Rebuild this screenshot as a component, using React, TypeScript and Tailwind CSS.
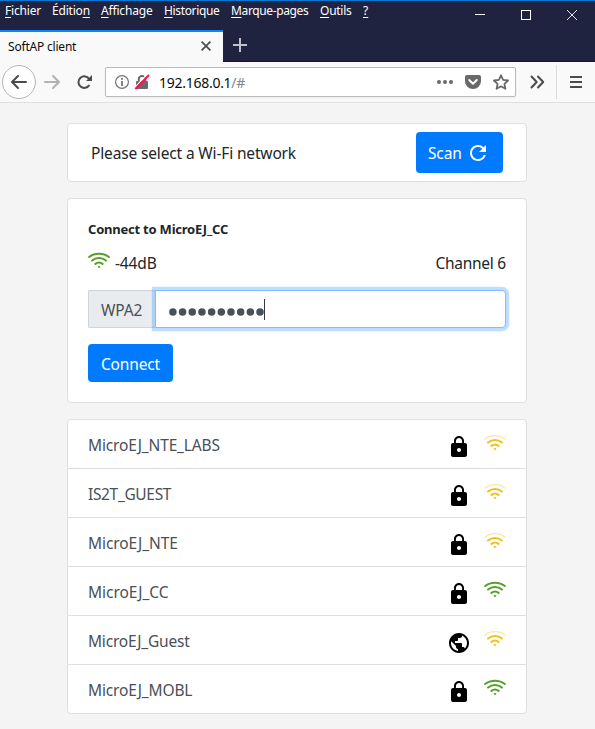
import type { ReactNode } from "react";
import { MdLock, MdPublic, MdRefresh } from "react-icons/md";

const menu = [
  { key: "F", rest: "ichier", cls: "w-[47px] tracking-[-0.18px]" },
  { key: "É", rest: "dition", cls: "w-[49px] tracking-[-0.2px]", last: true },
  { key: "A", rest: "ffichage", cls: "w-[63px] tracking-[-0.18px]" },
  { key: "H", rest: "istorique", cls: "w-[67px] tracking-[-0.35px]" },
  { key: "M", rest: "arque-pages", cls: "w-[89px] tracking-[-0.37px]" },
  { key: "O", rest: "utils", cls: "w-[43px] tracking-[-0.25px]" },
  { key: "?", rest: "", cls: "w-[10px]" },
];

const networks = [
  { name: "MicroEJ_NTE_LABS", locked: true, strong: false, cls: "tracking-[-0.14px]" },
  { name: "IS2T_GUEST", locked: true, strong: false, cls: "tracking-[-0.34px]" },
  { name: "MicroEJ_NTE", locked: true, strong: false, cls: "tracking-[-0.08px]" },
  { name: "MicroEJ_CC", locked: true, strong: true, cls: "tracking-[-0.04px]" },
  { name: "MicroEJ_Guest", locked: false, strong: false, cls: "tracking-[-0.2px]" },
  { name: "MicroEJ_MOBL", locked: true, strong: true, cls: "tracking-[-0.14px]" },
];

function Wifi({ strong }: { strong: boolean }) {
  const color = strong ? "#55a02a" : "#ecc11c";
  return (
    <svg width="22" height="16" viewBox="0 0 22 16" fill="none" stroke={color} strokeWidth="2.1" strokeLinecap="round" className="shrink-0">
      <path d="M1.2 5C6.5.6 15.5.6 20.8 5" strokeWidth={strong ? 2 : 1.3} opacity={strong ? 1 : 0.4} />
      <path d="M4.1 8.5c4-3.3 9.8-3.3 13.8 0" />
      <path d="M7.4 11.9c2.1-1.6 5.1-1.6 7.2 0" />
      <ellipse cx="11" cy="14.9" rx="1.3" ry="0.9" fill={color} stroke="none" />
    </svg>
  );
}

function Card({ className, children }: { className: string; children: ReactNode }) {
  return <section className={`w-[460px] rounded-[4px] border border-[#dedfdf] bg-white ${className}`}>{children}</section>;
}

function TitleBar() {
  return (
    <div className="flex h-[62px] flex-col border-t border-[#0078d7] bg-[#202340] shadow-[inset_0_-1px_0_#15132b]">
      <div className="flex h-[29px] shrink-0 justify-between">
        <nav className="flex pl-[5px] pt-[2px] text-[12px] leading-[16px] text-white">
          {menu.map((m) => (
            <span key={m.key} className={`whitespace-nowrap ${m.cls}`}>
              {m.last ? (
                <>{m.key}ditio<u className="underline-offset-2">n</u></>
              ) : (
                <><u className="underline-offset-2">{m.key}</u>{m.rest}</>
              )}
            </span>
          ))}
        </nav>
        <svg width="120" height="29" viewBox="475 1 120 29" fill="none" stroke="#fff" shapeRendering="crispEdges">
          <path d="M475 14.5h10M521.5 10.5h9v9h-9z" />
          <path d="M567 10l10 10M577 10l-10 10" shapeRendering="auto" strokeWidth="0.9" />
        </svg>
      </div>
      <div className="flex h-8 shrink-0">
        <div className="flex w-[223px] items-start justify-between border-t-2 border-[#0a84ff] bg-[#f9f9fa] pl-2 pr-[12px]">
          <span className="pt-[7px] text-[12px] leading-[16px] tracking-[-0.2px] text-[#0c0c0d]">SoftAP client</span>
          <svg width="10" height="10" viewBox="0 0 10 10" stroke="#4a4a4f" strokeWidth="1.7" className="mt-[9px]">
            <path d="M.6.6l8.8 8.8M9.4.6L.6 9.4" />
          </svg>
        </div>
        <svg width="14" height="14" viewBox="0 0 14 14" stroke="#c1c1cb" strokeWidth="2" className="ml-[10px] mt-2">
          <path d="M7 0v14M0 7h14" />
        </svg>
      </div>
    </div>
  );
}

function Toolbar() {
  return (
    <div className="flex h-[41px] items-start border-b border-[#dfdfe0] bg-[#f9f9fa]">
      <svg width="105" height="40" viewBox="0 62 105 40" fill="none" stroke="#4a4a4f" strokeWidth="2" strokeLinecap="round" strokeLinejoin="round">
        <circle cx="19" cy="82" r="16.5" fill="#fff" stroke="#b5b5b6" strokeWidth="1" />
        <path d="M26 82H12.5M18 76l-6 6 6 6" />
        <path d="M45 82h13.5M53 76l6 6-6 6" stroke="#b2b2b4" />
        <path d="M89.3 79.3A5.8 5.8 0 1 0 89.3 85" strokeLinecap="butt" />
        <path d="M92 75v6h-6z" fill="#4a4a4f" stroke="none" />
      </svg>
      <div className="mt-[5px] flex h-[30px] w-[411px] items-center rounded-[2px] border border-[#bababb] bg-white shadow-[0_1px_3px_rgba(0,0,0,0.05)]">
        <svg width="53" height="28" viewBox="106 68 53 28" fill="none">
          <circle cx="122" cy="82" r="6.4" stroke="#737373" strokeWidth="1.2" />
          <path d="M122 81v5M122 78v1.8" stroke="#737373" strokeWidth="1.8" />
          <path d="M138.8 81v-1.7a3.2 3.2 0 0 1 6.4 0V81" stroke="#6a6a6b" strokeWidth="2" />
          <rect x="136" y="81" width="12" height="8" rx="1" fill="#6a6a6b" />
          <path d="M134.2 88.2l12.6-13.5" stroke="#fff" strokeWidth="1.3" />
          <path d="M135.3 89L149 75" stroke="#ff0f4c" strokeWidth="2" />
        </svg>
        <span className="flex-1 pt-px text-[14px] leading-[20px] tracking-[-0.27px] text-[#0c0c0d]">
          192.168.0.1<span className="text-[#84848a]">/#</span>
        </span>
        <svg width="82" height="28" viewBox="433 68 82 28" fill="#696969">
          <circle cx="439" cy="82" r="2" /><circle cx="445" cy="82" r="2" /><circle cx="451" cy="82" r="2" />
          <path d="M467 75h12a2 2 0 0 1 2 2v4a8 8 0 0 1-16 0v-4a2 2 0 0 1 2-2z" />
          <path d="M469.2 80l3.8 3.7 3.8-3.7" fill="none" stroke="#fff" strokeWidth="2" strokeLinecap="round" strokeLinejoin="round" />
          <path d="M501 75.3l2.1 4.6 5 .6-3.7 3.4 1 4.9-4.4-2.5-4.4 2.5 1-4.9-3.7-3.4 5-.6z" fill="none" stroke="#696969" strokeWidth="1.8" strokeLinejoin="round" />
        </svg>
      </div>
      <svg width="79" height="40" viewBox="516 62 79 40" fill="none" stroke="#4a4a4f" strokeWidth="2">
        <path d="M531.5 76.5l5.2 5.5-5.2 5.5M538 76.5l5.2 5.5-5.2 5.5" strokeLinecap="round" strokeLinejoin="round" />
        <path d="M556.5 65v34" stroke="#dcdcdd" strokeWidth="1" />
        <path d="M570 77h12M570 82h12M570 87h12" />
      </svg>
    </div>
  );
}

export default function App() {
  return (
    <div className="flex h-[729px] w-[595px] flex-col overflow-hidden bg-[#f4f4f4] font-['Noto_Sans',sans-serif] text-[15.5px] leading-6 text-[#212529]">
      <TitleBar />
      <Toolbar />
      <main className="flex flex-col gap-4 pl-[67px] pt-5">
        <Card className="flex h-[59px] items-center justify-between pl-[23px] pr-[23px]">
          <span className="pt-px tracking-[-0.15px]">Please select a Wi-Fi network</span>
          <button className="flex h-[41px] w-[87px] items-center rounded-[4px] bg-[#007bff] pl-3 text-white">
            <span className="w-[38px] text-left tracking-[-0.15px]">Scan</span>
            <MdRefresh size={24} />
          </button>
        </Card>

        <Card className="flex h-[205px] flex-col px-5 pt-5">
          <h1 className="h-[21px] text-[13px] font-bold leading-[21px] tracking-[-0.22px]">Connect to MicroEJ_CC</h1>
          <div className="mt-[11px] flex h-6 items-start justify-between">
            <div className="flex gap-[5px]">
              <div className="pt-px"><Wifi strong /></div>
              <span className="tracking-[-0.15px]">-44dB</span>
            </div>
            <span className="tracking-[-0.25px]">Channel 6</span>
          </div>
          <div className="mt-[15px] flex h-[38px] shrink-0">
            <div className="flex w-[67px] items-center rounded-l-[2px] border border-r-0 border-[#ced4da] bg-[#e9ecef] pl-3 pt-[2px] tracking-[-0.1px] text-[#495057]">WPA2</div>
            <div className="flex flex-1 items-center rounded-r-[4px] border border-[#80bdff] bg-white pl-[13px] shadow-[0_0_0_3.2px_rgba(0,123,255,0.25)]">
              <svg width="95" height="8" viewBox="0 0 95 8" fill="#495057" className="mt-[5px]">
                {Array.from({ length: 10 }, (_, i) => (
                  <circle key={i} cx={3.9 + i * 9.68} cy="4" r="3.75" />
                ))}
              </svg>
              <span className="h-[21px] w-px bg-[#343a40]" />
            </div>
          </div>
          <button className="mt-4 h-[38px] w-[85px] shrink-0 rounded-[4px] bg-[#007bff] pt-[2px] tracking-[-0.15px] text-white">Connect</button>
        </Card>

        <Card className="flex h-[295px] flex-col">
          {networks.map((n) => (
            <div key={n.name} className="flex h-[49px] shrink-0 items-start justify-between border-b border-[#dedfdf] pl-5 pr-5 text-[#495057] last:h-12 last:border-b-0">
              <span className={`pt-[13px] ${n.cls}`}>{n.name}</span>
              <div className="flex items-start gap-[13px] pt-[15px]">
                {n.locked ? <MdLock size={24} color="#000" /> : <MdPublic size={24} color="#000" />}
                <div className="-mt-px"><Wifi strong={n.strong} /></div>
              </div>
            </div>
          ))}
        </Card>
      </main>
    </div>
  );
}
